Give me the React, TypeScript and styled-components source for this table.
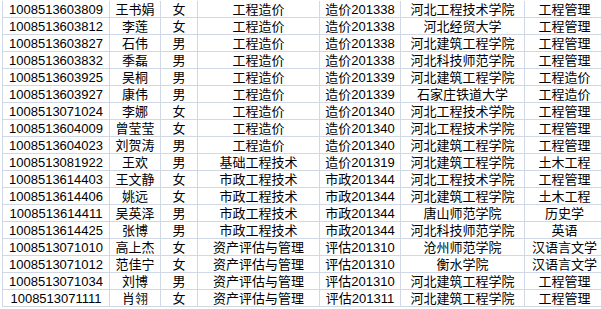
import React from "react";
import styled, { createGlobalStyle } from "styled-components";

const GlobalStyle = createGlobalStyle`
  html, body {
    margin: 0;
    padding: 0;
    background: #ffffff;
    overflow: hidden;
  }
`;

// rows copied from the sheet
const rows = [
  ["1008513603809", "王书娟", "女", "工程造价", "造价201338", "河北工程技术学院", "工程管理"],
  ["1008513603812", "李莲", "女", "工程造价", "造价201338", "河北经贸大学", "工程管理"],
  ["1008513603827", "石伟", "男", "工程造价", "造价201338", "河北建筑工程学院", "工程管理"],
  ["1008513603832", "季磊", "男", "工程造价", "造价201338", "河北科技师范学院", "工程管理"],
  ["1008513603925", "吴桐", "男", "工程造价", "造价201339", "河北建筑工程学院", "工程造价"],
  ["1008513603927", "康伟", "男", "工程造价", "造价201339", "石家庄铁道大学", "工程造价"],
  ["1008513071024", "李娜", "女", "工程造价", "造价201340", "河北工程技术学院", "工程管理"],
  ["1008513604009", "曾莹莹", "女", "工程造价", "造价201340", "河北工程技术学院", "工程管理"],
  ["1008513604023", "刘贺涛", "男", "工程造价", "造价201340", "河北建筑工程学院", "工程管理"],
  ["1008513081922", "王欢", "男", "基础工程技术", "造价201319", "河北建筑工程学院", "土木工程"],
  ["1008513614403", "王文静", "女", "市政工程技术", "市政201344", "河北工程技术学院", "工程管理"],
  ["1008513614406", "姚远", "女", "市政工程技术", "市政201344", "河北建筑工程学院", "土木工程"],
  ["1008513614411", "吴英泽", "男", "市政工程技术", "市政201344", "唐山师范学院", "历史学"],
  ["1008513614425", "张博", "男", "市政工程技术", "市政201344", "河北科技师范学院", "英语"],
  ["1008513071010", "高上杰", "女", "资产评估与管理", "评估201310", "沧州师范学院", "汉语言文学"],
  ["1008513071012", "范佳宁", "女", "资产评估与管理", "评估201310", "衡水学院", "汉语言文学"],
  ["1008513071034", "刘博", "男", "资产评估与管理", "评估201310", "河北建筑工程学院", "工程管理"],
  ["1008513071111", "肖翎", "女", "资产评估与管理", "评估201311", "河北建筑工程学院", "工程管理"],
];

const Sheet = styled.div`
  display: grid;
  grid-template-columns: 107px 51px 37px 122px 81px 124px 80px;
  grid-auto-rows: 17px;
  padding: 1px 0 0 2px;
  width: 620px;
  font-family: "Liberation Sans", "Noto Sans CJK SC", sans-serif;
  font-size: 13px;
  color: #000;
`;

const Cell = styled.div`
  box-sizing: border-box;
  border-left: 1px solid #d0d7e5;
  border-bottom: 1px solid #d0d7e5;
  display: flex;
  align-items: flex-end;
  justify-content: center;
  line-height: 15px;
  padding-bottom: 0px;
  white-space: nowrap;
  overflow: hidden;
`;

export default function App() {
  return (
    <>
      <GlobalStyle />
      <Sheet>
        {rows.map((r, i) =>
          r.map((v, j) => <Cell key={i + "-" + j}>{v}</Cell>)
        )}
      </Sheet>
    </>
  );
}
